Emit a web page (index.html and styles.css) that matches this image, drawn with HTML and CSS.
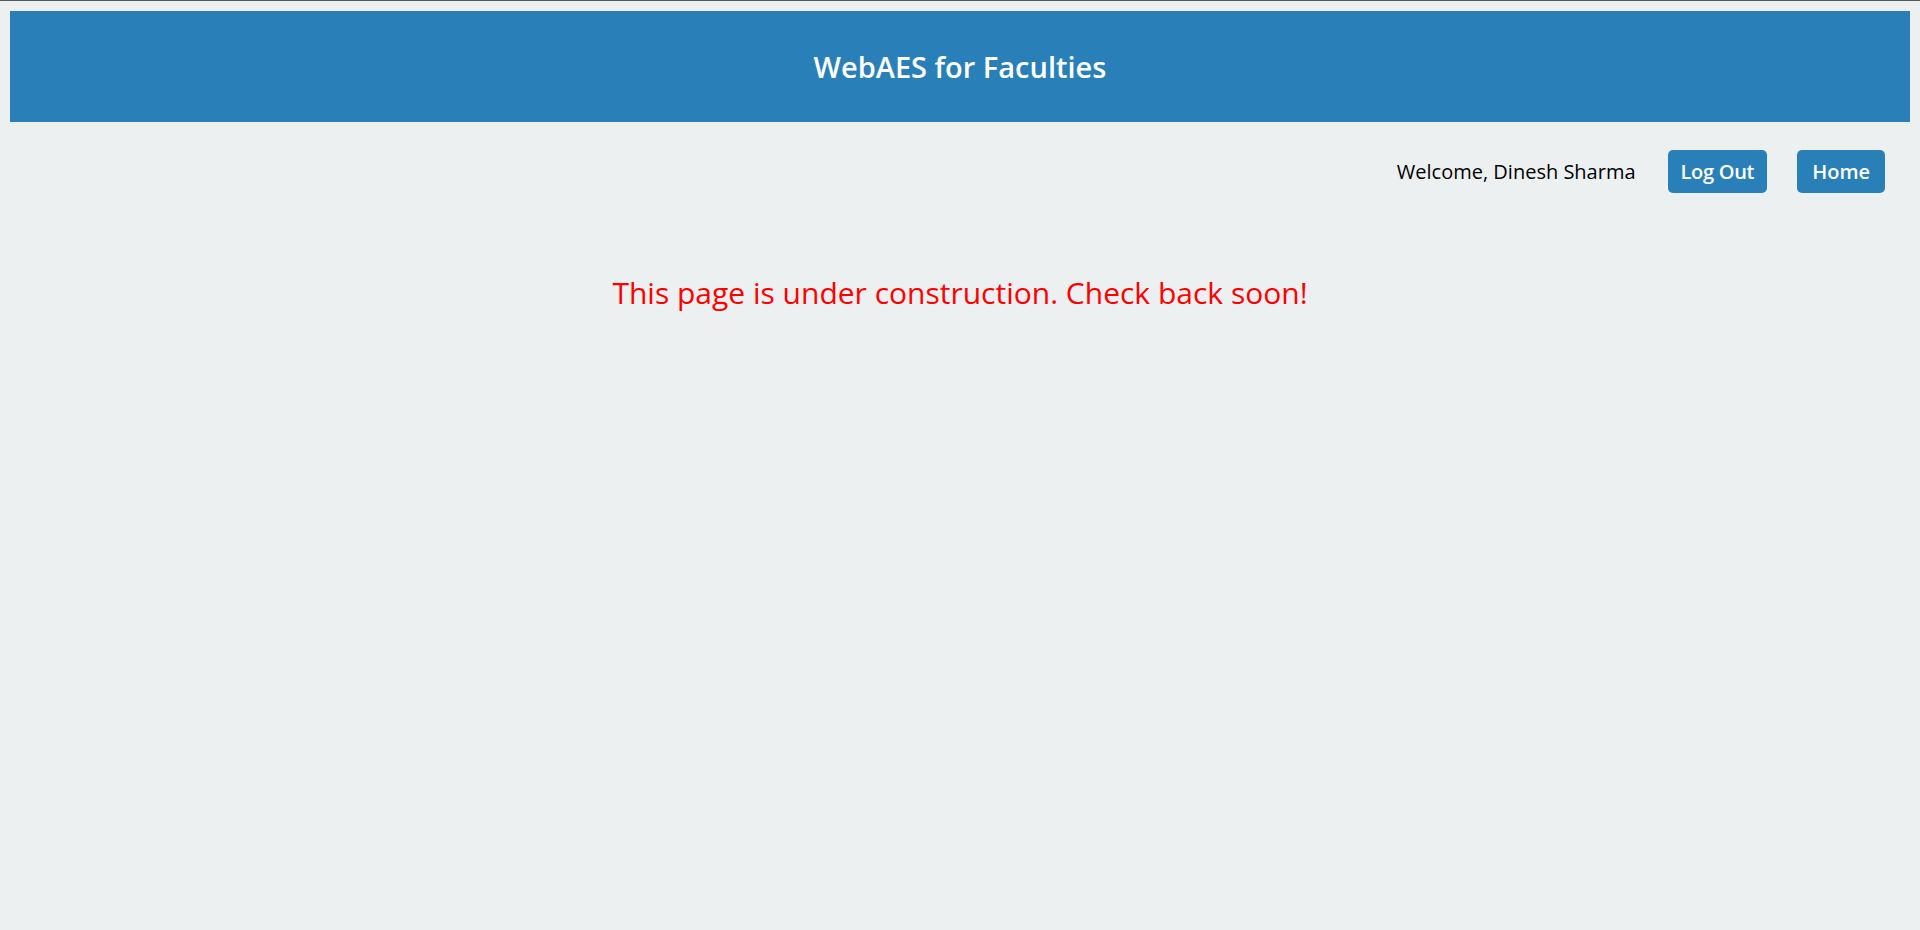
FILE: index.html
```html
<!DOCTYPE html>
<html lang="en">
<head>
<meta charset="utf-8">
<title>WebAES for Faculties</title>
<link rel="stylesheet" href="styles.css">
</head>
<body>
<div class="page">
  <header class="banner">
    <h1 class="banner-title">WebAES for Faculties</h1>
  </header>
  <nav class="user-bar">
    <span class="welcome">Welcome, Dinesh Sharma</span>
    <a class="btn btn-logout" href="#">Log Out</a>
    <a class="btn" href="#">Home</a>
  </nav>
  <main class="content">
    <p class="notice">This page is under construction. Check back soon!</p>
  </main>
</div>
</body>
</html>
```

FILE: styles.css
```css
html, body {
  margin: 0;
  padding: 0;
  height: 100%;
}

body {
  background: #ecf0f1;
  border-top: 1px solid #54595d;
  box-sizing: border-box;
  font-family: "Open Sans", "Noto Sans", sans-serif;
  color: #000;
}

.page {
  padding: 10px;
}

.banner {
  background: #2980b9;
  height: 111px;
  display: flex;
  align-items: center;
  justify-content: center;
}

.banner-title {
  margin: 0;
  color: #fff;
  font-size: 29px;
  font-weight: 600;
  line-height: 1;
}

.user-bar {
  display: flex;
  justify-content: flex-end;
  align-items: center;
  margin-top: 28px;
  padding-right: 25px;
}

.welcome {
  font-size: 20px;
  margin-right: 32px;
}

.btn {
  display: inline-flex;
  align-items: center;
  height: 43px;
  box-sizing: border-box;
  padding: 0 15px;
  background: #2980b9;
  color: #fff;
  font-size: 20px;
  font-weight: 600;
  text-decoration: none;
  border-radius: 5px;
}

.btn-logout {
  margin-right: 30px;
  padding: 0 13px;
  letter-spacing: -0.3px;
}

.content {
  margin-top: 79px;
}

.notice {
  margin: 0;
  text-align: center;
  color: #ff0000;
  font-size: 30px;
}
```
